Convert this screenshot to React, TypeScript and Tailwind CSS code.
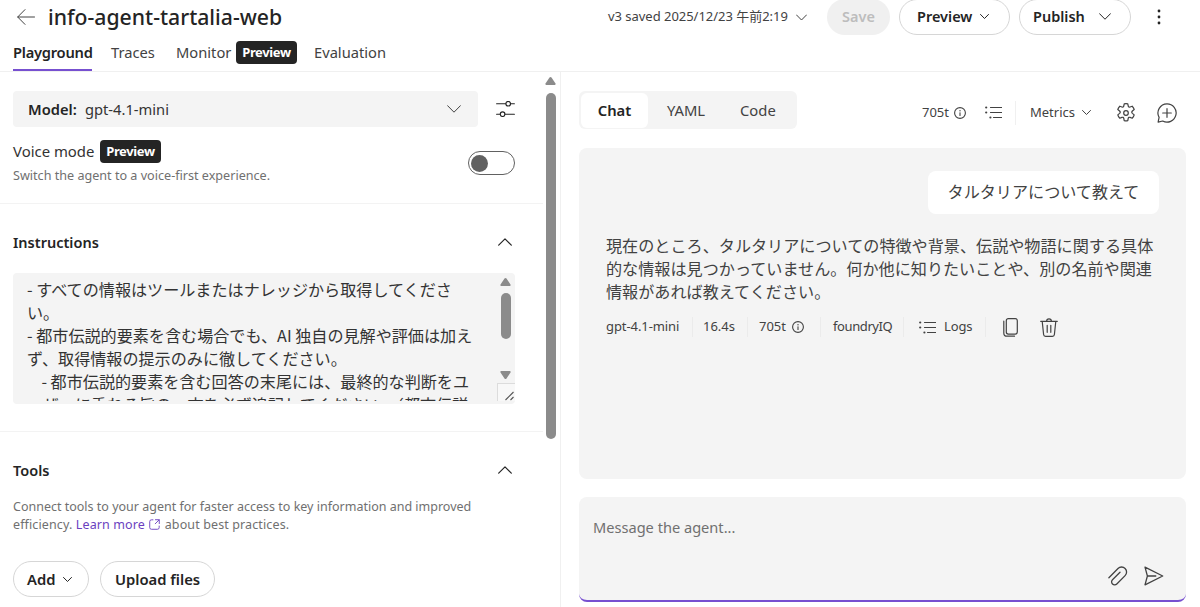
import type { ReactNode } from 'react';

interface IconProps {
  className?: string;
}

const instructions = `- すべての情報はツールまたはナレッジから取得してください。
- 都市伝説的要素を含む場合でも、AI 独自の見解や評価は加えず、取得情報の提示のみに徹してください。
    - 都市伝説的要素を含む回答の末尾には、最終的な判断をユーザーに委ねる旨の一文を必ず追記してください。（都市伝説`;

function ChevronDown({ className }: IconProps) {
  return (
    <svg viewBox="0 0 14 8" fill="none" stroke="currentColor" strokeLinecap="round" strokeLinejoin="round" className={className}>
      <path d="M.6.7 7 7.2 13.4.7" vectorEffect="non-scaling-stroke" />
    </svg>
  );
}

function ChevronUp({ className }: IconProps) {
  return (
    <svg viewBox="0 0 14 8" fill="none" stroke="currentColor" strokeWidth="1.2" strokeLinecap="round" strokeLinejoin="round" className={className}>
      <path d="M.7 7.2 7 .9l6.3 6.3" />
    </svg>
  );
}

function ArrowLeft({ className }: IconProps) {
  return (
    <svg viewBox="0 0 18 16" fill="none" stroke="currentColor" strokeLinecap="round" strokeLinejoin="round" className={className}>
      <path d="M8 .6.7 8 8 15.4M.8 8h16.7" />
    </svg>
  );
}

function ScrollArrow({ className }: IconProps) {
  return (
    <svg viewBox="0 0 11 8" className={className}>
      <path d="M5.5 0q.6 0 1 .6l4 6Q11 8 9.8 8H1.2Q0 8 .5 6.6l4-6Q4.900 0 5.500 0Z" />
    </svg>
  );
}

function InfoIcon({ className }: IconProps) {
  return (
    <svg viewBox="0 0 12 12" fill="none" stroke="currentColor" strokeWidth="1.1" strokeLinecap="round" className={className}>
      <circle cx="6" cy="6" r="5.4" />
      <path d="M6 5.7v2.7" />
      <circle cx="6" cy="3.7" r=".7" fill="currentColor" stroke="none" />
    </svg>
  );
}

function ListIcon({ className }: IconProps) {
  return (
    <svg viewBox="0 0 17 13" fill="none" stroke="currentColor" strokeWidth="1.2" strokeLinecap="round" className={className}>
      <path d="M5.5 1.5h11M5.5 6.5h11M8.5 11.5h8" />
      <g fill="currentColor" stroke="none">
        <circle cx="1.2" cy="1.5" r="1.1" />
        <circle cx="1.2" cy="6.5" r="1.1" />
        <circle cx="5.4" cy="11.5" r="1.1" />
      </g>
    </svg>
  );
}

function SlidersIcon({ className }: IconProps) {
  return (
    <svg viewBox="0 0 19 16" fill="none" stroke="currentColor" strokeWidth="1.1" strokeLinecap="round" className={className}>
      <path d="M.6 2.7h9.2M14.6 2.7h3.8M.6 13.2h3.6M9 13.2h9.4" />
      <circle cx="12.2" cy="2.7" r="2.3" />
      <circle cx="6.6" cy="13.2" r="2.3" />
    </svg>
  );
}

function GearIcon({ className }: IconProps) {
  return (
    <svg viewBox="0 0 20 20" fill="none" stroke="currentColor" strokeWidth="1.2" strokeLinejoin="round" className={className}>
      <path d="M8.200.8q1.800-.4 3.600 0l.4 2.200q.4 1.500 1.900 1l2.100-.8q1.500 1.400 2 3.300l-1.800 1.500q-1.200 1.200 0 2.400l1.800 1.500q-.5 1.900-2 3.300l-2.100-.8q-1.500-.5-1.900 1l-.4 2.200q-1.800.4-3.600 0l-.4-2.200q-.4-1.500-1.900-1l-2.100.8q-1.500-1.400-2-3.300l1.800-1.500q1.200-1.200 0-2.400L1.800 6.500q.5-1.900 2-3.300l2.100.8q1.500.5 1.900-1z" />
      <circle cx="10" cy="10" r="2.3" />
    </svg>
  );
}

function ChatAddIcon({ className }: IconProps) {
  return (
    <svg viewBox="0 0 20 20" fill="none" stroke="currentColor" strokeWidth="1.2" strokeLinecap="round" strokeLinejoin="round" className={className}>
      <path d="M10 .9a9.100 9.100 0 1 1-4.300 17.100L1.100 19.100l1-4.700A9.100 9.100 0 0 1 10 .9ZM10 5.700v8.600M5.700 10h8.600" />
    </svg>
  );
}

function CopyIcon({ className }: IconProps) {
  return (
    <svg viewBox="0 0 15 19" fill="none" stroke="currentColor" strokeWidth="1.2" strokeLinecap="round" className={className}>
      <rect x="3.3" y=".7" width="11" height="15.4" rx="2" />
      <path d="M.8 3.200v11.700a3.300 3.300 0 0 0 3.300 3.300h7.400" />
    </svg>
  );
}

function TrashIcon({ className }: IconProps) {
  return (
    <svg viewBox="0 0 18 19" fill="none" stroke="currentColor" strokeWidth="1.2" strokeLinecap="round" strokeLinejoin="round" className={className}>
      <path d="M.7 3.300h16.600M6.600 3.300a2.400 2.400 0 0 1 4.800 0M2.200 3.300l1.400 13.200a2 2 0 0 0 2 1.800h6.800a2 2 0 0 0 2-1.800l1.400-13.200M7.200 7.300v7M10.800 7.300v7" />
    </svg>
  );
}

function OpenIcon({ className }: IconProps) {
  return (
    <svg viewBox="0 0 12 12" fill="none" stroke="currentColor" strokeLinecap="round" strokeLinejoin="round" className={className}>
      <path d="M4.300.9H2.700A1.900 1.900 0 0 0 .8 2.800v6.500a1.900 1.900 0 0 0 1.900 1.900h6.500a1.900 1.900 0 0 0 1.900-1.900V7.700M7 .8h4.200V5M11 1 6.800 5.200" />
    </svg>
  );
}

function AttachIcon({ className }: IconProps) {
  return (
    <svg viewBox="0 0 20 20" fill="none" stroke="currentColor" strokeWidth="1.3" strokeLinecap="round" className={className}>
      <path d="M.9 11.800 10 2.500a5 5 0 0 1 7.100 0 5 5 0 0 1 0 7.100L8.800 18a3 3 0 0 1-4.300 0 3 3 0 0 1 0-4.300L12 6.200" />
    </svg>
  );
}

function SendIcon({ className }: IconProps) {
  return (
    <svg viewBox="0 0 20 20" fill="none" stroke="currentColor" strokeWidth="1.3" strokeLinecap="round" strokeLinejoin="round" className={className}>
      <path d="M1 1.200 18.700 10 1 18.800 3.400 10zM3.500 10h8.300" />
    </svg>
  );
}

function PreviewBadge() {
  return (
    <span className="flex h-[23px] w-[61px] items-center justify-center rounded bg-[#242424] pt-px text-[13px] font-bold tracking-[-0.35px] text-white">
      Preview
    </span>
  );
}

function Section({ title, children }: { title: string; children: ReactNode }) {
  return (
    <section>
      <div className="flex h-6 items-center justify-between pr-[31px]">
        <h2 className="text-[14.5px] font-semibold text-[#242424]">{title}</h2>
        <ChevronUp className="mt-[-2px] h-2 w-3.5" />
      </div>
      {children}
    </section>
  );
}

function Header() {
  return (
    <header className="h-[72px] shrink-0 border-b border-[#f0f0f0]">
      <div className="flex h-[34px] items-center pl-[17px]">
        <ArrowLeft className="h-4 w-[18px] text-[#424242]" />
        <h1 className="ml-[13px] w-[560px] text-[21.2px] font-medium">info-agent-tartalia-web</h1>
        <span className="w-[188px] text-[13px] tracking-[-0.03px] text-[#424242]">v3 saved 2025/12/23 午前2:19</span>
        <ChevronDown className="h-[7px] w-[11px] text-[#424242]" />
        <button className="mt-[-1px] ml-5 h-9 w-[63px] rounded-full bg-[#f0f0f0] text-[14.5px] font-semibold text-[#bdbdbd]">Save</button>
        <button className="mt-[-1px] ml-[9px] flex h-9 w-[111px] items-center rounded-full border border-[#d6d6d6] pl-[17px] text-[14.5px] font-semibold">
          <span className="w-[63px] text-left">Preview</span>
          <ChevronDown className="h-[5px] w-[9px]" />
        </button>
        <button className="mt-[-1px] ml-[9px] flex h-9 w-[112px] items-center rounded-full border border-[#d6d6d6] pl-[13px] text-[14.5px] font-semibold">
          <span className="w-[66px] text-left">Publish</span>
          <ChevronDown className="h-[7px] w-3" />
        </button>
        <svg viewBox="0 0 4 16" className="ml-[26px] h-4 w-1" fill="currentColor">
          <circle cx="2" cy="2" r="1.4" />
          <circle cx="2" cy="8" r="1.4" />
          <circle cx="2" cy="14" r="1.4" />
        </svg>
      </div>
      <nav className="flex h-[37px] items-center pl-[13px] text-[14.7px] text-[#424242]">
        <span className="flex h-full w-[79px] items-center border-b-2 border-[#7750d0] pt-0.5 font-semibold tracking-[-0.25px] text-[#242424]">Playground</span>
        <span className="ml-[19px] w-[65px]">Traces</span>
        <span className="w-[60px]">Monitor</span>
        <PreviewBadge />
        <span className="ml-[17px]">Evaluation</span>
      </nav>
    </header>
  );
}

function AgentSettings() {
  return (
    <div className="flex w-[561px] shrink-0 border-r border-[#f0f0f0]">
      <div className="w-[543px] overflow-hidden pt-[19px]">
        <div className="flex items-center pl-[13px]">
          <div className="flex h-9 w-[465px] items-center rounded bg-[#f4f4f4] pl-[15px] text-[14.7px]">
            <span className="w-[57px] font-semibold">Model:</span>
            <span className="w-[362px] text-[#333]">gpt-4.1-mini</span>
            <ChevronDown className="h-2 w-3.5 text-[#424242]" />
          </div>
          <SlidersIcon className="ml-[18px] h-4 w-[19px]" />
        </div>
        <div className="mt-[13px] flex h-[64px] items-start border-b border-[#f3f3f3] pl-[13px]">
          <div className="w-[455px]">
            <div className="flex items-center">
              <span className="w-[87px] text-[14.9px] text-[#333]">Voice mode</span>
              <PreviewBadge />
            </div>
            <p className="mt-1 text-[12.6px] leading-[18px] text-[#707070]">Switch the agent to a voice-first experience.</p>
          </div>
          <div className="mt-[11px] flex h-6 w-[47px] items-center rounded-full border border-[#616161] pl-0.5">
            <span className="size-[17px] rounded-full bg-[#616161]" />
          </div>
        </div>
        <div className="h-[228px] border-b border-[#f3f3f3] pt-[27px] pl-[13px]">
          <Section title="Instructions">
            <div className="mt-[18px] flex h-[131px] w-[502px] overflow-hidden rounded bg-[#f4f4f4] pl-3.5">
              <div className="h-[128px] w-[455px] overflow-hidden pt-[5px] font-['Noto_Sans_CJK_JP',sans-serif] text-[16.1px] leading-[23px] whitespace-pre-wrap text-[#333]">
                {instructions}
              </div>
              <div className="flex flex-1 flex-col items-end">
                <ScrollArrow className="mt-[5px] mr-1 h-2 w-[11px] fill-[#8b8b8b]" />
                <div className="mt-[7px] mr-1 h-[46px] w-2.5 rounded-full bg-[#8b8b8b]" />
                <ScrollArrow className="mt-8 mr-1 h-2 w-[11px] rotate-180 fill-[#8b8b8b]" />
                <div className="mt-1 h-[18px] w-[18px] border-t border-l border-[#dcdcdc] bg-[#f8f8f8]">
                  <svg viewBox="0 0 17 17" className="size-[17px]" stroke="#555" strokeWidth="1.1">
                    <path d="m7.5 16 8-8M12.5 16l3-3" />
                  </svg>
                </div>
              </div>
            </div>
          </Section>
        </div>
        <div className="pt-[27px] pl-[13px]">
          <Section title="Tools">
            <p className="mt-[15px] text-[12.5px] leading-[18px] whitespace-nowrap text-[#707070]">
              Connect tools to your agent for faster access to key information and improved
              <br />
              <span className="tracking-[0.12px]">
                efficiency. <a className="text-[#6b3fc0]">Learn more <OpenIcon className="mx-px mt-[-2px] inline h-[11px] w-[11px]" /></a> about best practices.
              </span>
            </p>
            <div className="mt-[27px] flex gap-[11px] text-[14.8px] font-semibold">
              <button className="flex h-9 w-[76px] items-center rounded-full border border-[#d6d6d6] pl-[13px]">
                <span className="w-9 text-left">Add</span>
                <ChevronDown className="h-[5px] w-[9px]" />
              </button>
              <button className="h-9 w-[115px] rounded-full border border-[#d6d6d6]">Upload files</button>
            </div>
          </Section>
        </div>
      </div>
      <div className="flex flex-col items-center pt-[5px] pl-[2px]">
        <ScrollArrow className="h-2 w-[11px] fill-[#8b8b8b]" />
        <div className="mt-2 h-[346px] w-2.5 rounded-full bg-[#8b8b8b]" />
      </div>
    </div>
  );
}

function MetaDivider() {
  return <span className="h-5 w-px bg-[#ebebeb]" />;
}

function Chat() {
  return (
    <main className="flex flex-1 flex-col pt-[19px] pl-[18px]">
      <div className="flex h-[38px] items-center text-[#424242]">
        <div className="flex h-[38px] w-[218px] items-center rounded-md bg-[#f4f4f4] p-0.5 text-[14.8px]">
          <span className="flex h-[35px] w-[67px] items-center justify-center rounded-md bg-white pt-px font-semibold text-[#242424]">Chat</span>
          <span className="ml-[19px] w-[73px] pt-px">YAML</span>
          <span className="pt-px">Code</span>
        </div>
        <div className="ml-[125px] flex items-center pt-[5px] text-[13px]">
          <span className="w-8">705t</span>
          <InfoIcon className="size-3" />
          <ListIcon className="ml-[19px] h-[13px] w-[17px]" />
          <span className="ml-[13px] h-6 w-px bg-[#f0f0f0]" />
          <span className="ml-[14px] w-[52px]">Metrics</span>
          <ChevronDown className="h-[5px] w-[9px]" />
          <GearIcon className="ml-[25px] size-5" />
          <ChatAddIcon className="ml-[21px] size-5" />
        </div>
      </div>
      <div className="mt-[19px] h-[331px] w-[607px] rounded-lg bg-[#f4f4f4] pt-[23px] text-[#424242]">
        <div className="ml-[349px] flex h-[43px] w-[231px] items-center justify-center rounded-lg bg-white pb-[3px] font-['Noto_Sans_CJK_JP',sans-serif] text-[16.1px]">
          タルタリアについて教えて
        </div>
        <p className="mt-5 ml-[27px] w-[560px] font-['Noto_Sans_CJK_JP',sans-serif] text-[16.12px] leading-[23px]">
          現在のところ、タルタリアについての特徴や背景、伝説や物語に関する具体
          <br />
          的な情報は見つかっていません。何か他に知りたいことや、別の名前や関連
          <br />
          情報があれば教えてください。
        </p>
        <div className="mt-[14px] ml-[27px] flex h-5 items-center text-[13px]">
          <span className="w-[86px] tracking-[-0.08px]">gpt-4.1-mini</span>
          <MetaDivider />
          <span className="ml-2.5 w-11">16.4s</span>
          <MetaDivider />
          <span className="ml-[11px] w-[33px]">705t</span>
          <InfoIcon className="mr-4 size-3" />
          <MetaDivider />
          <span className="ml-3 w-[70px] tracking-[-0.4px]">foundryIQ</span>
          <MetaDivider />
          <ListIcon className="ml-[15px] h-[13px] w-[17px]" />
          <span className="ml-2 w-[41px] tracking-[-0.1px]">Logs</span>
          <MetaDivider />
          <CopyIcon className="ml-[17px] h-[19px] w-[15px]" />
          <TrashIcon className="ml-[22px] h-[19px] w-[18px]" />
        </div>
      </div>
      <div className="mt-[18px] flex h-[105px] w-[607px] flex-col justify-between rounded-lg border-b-2 border-[#7750d0] bg-[#f4f4f4] px-3.5 pt-5 pb-3.5 text-[#424242]">
        <span className="text-[14.6px] leading-5 text-[#707070]">Message the agent...</span>
        <div className="flex justify-end gap-4 pr-2">
          <AttachIcon className="size-5" />
          <SendIcon className="size-5" />
        </div>
      </div>
    </main>
  );
}

export default function App() {
  return (
    <div className="flex h-[607px] w-[1200px] flex-col overflow-hidden bg-white font-['Noto_Sans','Noto_Sans_CJK_JP',sans-serif] whitespace-nowrap text-[#242424]">
      <Header />
      <div className="flex min-h-0 flex-1">
        <AgentSettings />
        <Chat />
      </div>
    </div>
  );
}
